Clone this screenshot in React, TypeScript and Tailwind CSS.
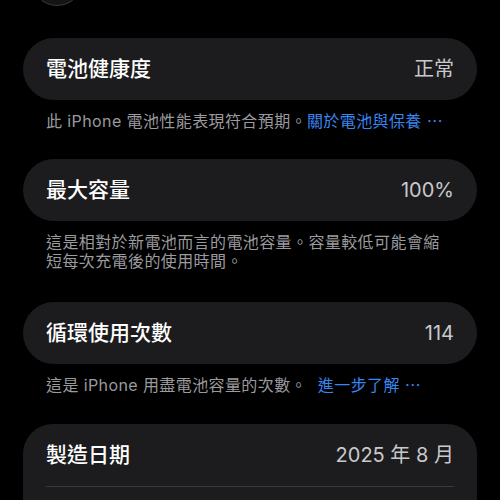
const font = "font-['Inter','Noto_Sans_CJK_TC',sans-serif]";

const Row = ({title, value}: {title: string; value: string}) => (
    <div className="flex items-center justify-between h-[62px] px-[23px]">
        <span className="text-[21px] font-medium text-white">{title}</span>
        <span className="text-[20px] text-[#c9c9cd]">{value}</span>
    </div>
)

const App = () => {
    return (
        <div className={`w-[500px] h-[500px] overflow-hidden bg-black px-[23px] ${font}`}>
            <div className="ml-[8px] mt-[-46px] w-[52px] h-[52px] rounded-full bg-[#151515] border border-[#3a3a3a]"></div>

            <div className="mt-[32px] rounded-full bg-[#1c1c1e]">
                <Row title="電池健康度" value="正常"/>
            </div>
            <p className="mt-[12px] px-[23px] text-[16px] tracking-[0.4px] leading-[18px] text-[#9a9a9f] whitespace-nowrap">
                此 iPhone 電池性能表現符合預期。<span className="text-[#3a86f0]">關於電池與保養 ⋯</span>
            </p>

            <div className="mt-[29px] rounded-full bg-[#1c1c1e]">
                <Row title="最大容量" value="100%"/>
            </div>
            <p className="mt-[12px] px-[23px] text-[16px] tracking-[0.4px] leading-[19px] text-[#9a9a9f] whitespace-nowrap">
                這是相對於新電池而言的電池容量。容量較低可能會縮<br/>短每次充電後的使用時間。
            </p>

            <div className="mt-[31px] rounded-full bg-[#1c1c1e]">
                <Row title="循環使用次數" value="114"/>
            </div>
            <p className="mt-[12px] px-[23px] text-[16px] tracking-[0.4px] leading-[18px] text-[#9a9a9f] whitespace-nowrap">
                這是 iPhone 用盡電池容量的次數。 <span className="ml-[6px] text-[#3a86f0]">進一步了解 ⋯</span>
            </p>

            <div className="mt-[30px] rounded-[30px] bg-[#1c1c1e]">
                <Row title="製造日期" value="2025 年 8 月"/>
                <div className="mx-[23px] border-t border-[#3a3a3c]"></div>
                <div className="h-[62px]"></div>
            </div>
        </div>
    )
}
export default App
